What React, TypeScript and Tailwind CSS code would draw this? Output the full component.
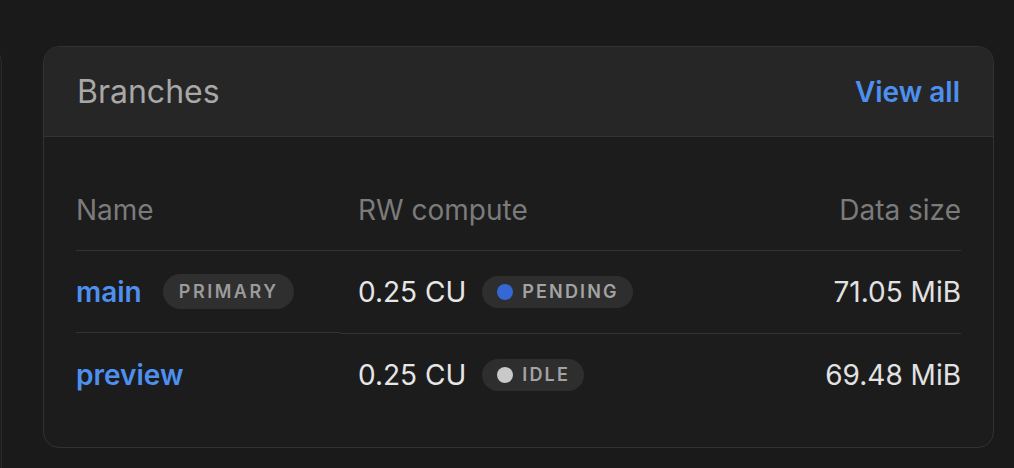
import React from 'react';

type Branch = {
  name: string;
  primary?: boolean;
  compute: string;
  status: 'PENDING' | 'IDLE';
  size: string;
};

const branches: Branch[] = [
  { name: 'main', primary: true, compute: '0.25 CU', status: 'PENDING', size: '71.05 MiB' },
  { name: 'preview', compute: '0.25 CU', status: 'IDLE', size: '69.48 MiB' },
];

const StatusBadge = ({ status }: { status: Branch['status'] }) => (
  <span className="flex h-[32px] items-center gap-[9px] rounded-full bg-[#2e2e2e] pl-[15px] pr-[14px]">
    <span
      className={
        status === 'PENDING'
          ? 'h-[16px] w-[16px] rounded-full bg-[#3368d6]'
          : 'h-[16px] w-[16px] rounded-full bg-[#c9c9c9]'
      }
    />
    <span className="text-[18px] font-semibold leading-none tracking-[0.12em] text-[#a3a3a3]">{status}</span>
  </span>
);

export default function App() {
  return (
    <div
      className="flex h-[468px] overflow-hidden bg-[#1a1a1a] pt-[46px]"
      style={{ fontFamily: 'Inter, "Noto Sans", sans-serif' }}
    >
      {/* edge of the neighbouring panel */}
      <div className="ml-[-98px] h-[520px] w-[100px] shrink-0 rounded-2xl border border-[#2c2c2c] bg-[#1c1c1c]" />

      <div className="ml-[41px] flex h-[402px] w-[951px] shrink-0 flex-col overflow-hidden rounded-[16px] border border-[#323232] bg-[#1c1c1c]">
        <div className="flex h-[90px] items-center justify-between border-b border-[#333] bg-[#262626] px-[33px]">
          <h2 className="text-[32px] font-normal text-[#a8a8a8]">Branches</h2>
          <a className="text-[28px] font-semibold text-[#4d90f0]">View all</a>
        </div>

        <div className="px-[32px] pt-[33px]">
          <div className="grid grid-cols-[264px_1fr_auto] items-start">
            <div className="flex h-[81px] items-center border-b border-[#333] pb-px text-[28px] text-[#7b7b7b]">Name</div>
            <div className="flex h-[81px] items-center border-b border-[#333] pb-px pl-[18px] text-[28px] text-[#7b7b7b]">RW compute</div>
            <div className="flex h-[81px] items-center justify-end border-b border-[#333] pb-px text-[28px] text-[#7b7b7b]">Data size</div>

            {branches.map((b, i) => {
              const last = i === branches.length - 1;
              const cellBase = last ? 'h-[82px]' : 'h-[83px] border-b border-[#333]';
              const nameCell = last ? 'h-[82px]' : 'h-[82px] border-b border-[#333]';
              return (
                <React.Fragment key={b.name}>
                  <div className={`flex items-center gap-[21px] ${nameCell}`}>
                    <span className="text-[28px] font-semibold text-[#4d90f0]">{b.name}</span>
                    {b.primary && (
                      <span className="flex h-[35px] items-center rounded-full bg-[#2f2f2f] pl-[16px] pr-[15px] text-[18px] font-semibold tracking-[0.14em] text-[#9b9b9b]">
                        PRIMARY
                      </span>
                    )}
                  </div>
                  <div className={`flex items-center gap-[16px] pl-[18px] ${cellBase}`}>
                    <span className="text-[28px] text-[#e6e6e6]">{b.compute}</span>
                    <StatusBadge status={b.status} />
                  </div>
                  <div className={`flex items-center justify-end text-[28px] text-[#e2e2e2] ${cellBase}`}>{b.size}</div>
                </React.Fragment>
              );
            })}
          </div>
        </div>
      </div>
    </div>
  );
}
